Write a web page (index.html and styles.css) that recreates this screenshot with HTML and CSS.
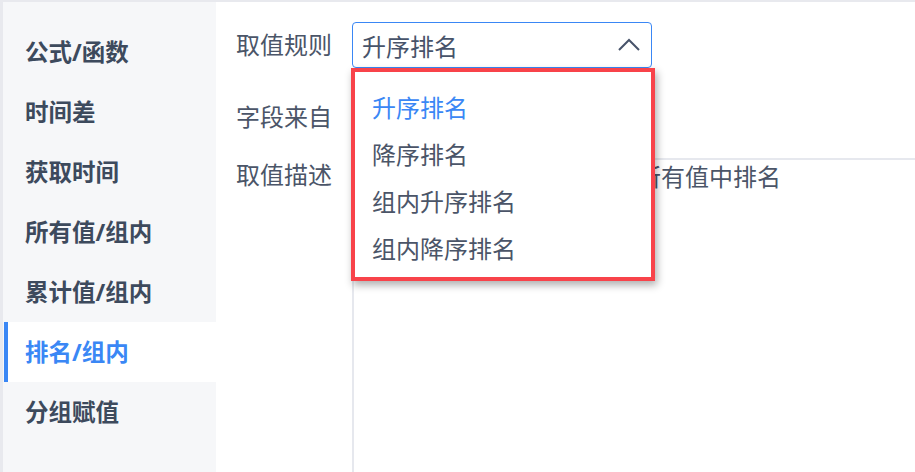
FILE: index.html
```html
<!DOCTYPE html>
<html lang="zh-CN">
<head>
    <meta charset="UTF-8">
    <meta name="viewport" content="width=device-width, initial-scale=1.0">
    <title>排名/组内</title>
    <link rel="stylesheet" href="styles.css">
</head>
<body>
    <div class="page">
        <aside class="sidebar">
            <div class="nav-item">公式/函数</div>
            <div class="nav-item">时间差</div>
            <div class="nav-item">获取时间</div>
            <div class="nav-item">所有值/组内</div>
            <div class="nav-item">累计值/组内</div>
            <div class="nav-item active">排名/组内</div>
            <div class="nav-item">分组赋值</div>
        </aside>

        <main class="content">
            <div class="form-row">
                <label class="form-label">取值规则</label>
                <div class="select-wrap">
                    <div class="select">
                        <span>升序排名</span>
                        <svg class="caret" width="24" height="14" viewBox="0 0 24 14">
                            <polyline points="2,12 12,2 22,12" fill="none" stroke="#47536a" stroke-width="2"/>
                        </svg>
                    </div>
                    <!-- open menu -->
                    <ul class="dropdown">
                        <li class="selected">升序排名</li>
                        <li>降序排名</li>
                        <li>组内升序排名</li>
                        <li>组内降序排名</li>
                    </ul>
                </div>
            </div>

            <div class="form-row field-row">
                <label class="form-label">字段来自</label>
                <div class="field"></div>
            </div>

            <div class="form-row desc-row">
                <label class="form-label">取值描述</label>
                <div class="desc-box">计算当前行值在该字段的所有值中排名</div>
            </div>
        </main>
    </div>
</body>
</html>
```

FILE: styles.css
```css
body {
    margin: 0;
    overflow: hidden;
    font-family: "Noto Sans", "Noto Sans CJK SC", sans-serif;
    background: #fff;
}
.page {
    display: flex;
    height: 472px;
    box-sizing: border-box;
    border-top: 2px solid #e8e9ee;
    border-left: 3px solid #e8e9ee;
}
.sidebar {
    width: 213px;
    flex-shrink: 0;
    box-sizing: border-box;
    padding: 20px 0 0 1px;
    background: #f6f7f9;
}
.nav-item {
    position: relative;
    height: 60px;
    line-height: 60px;
    padding-left: 21px;
    font-size: 23.5px;
    font-weight: bold;
    color: #3d4a5d;
}
.nav-item.active {
    background: #fff;
    color: #3a87f5;
}
.nav-item.active::before {
    content: "";
    position: absolute;
    left: 0;
    top: 0;
    bottom: 0;
    width: 4px;
    background: #3a87f5;
}
.content {
    flex: 1;
    padding: 20px 0 0 20px;
    display: flex;
    flex-direction: column;
}
.form-row {
    display: flex;
    height: 46px;
}
.form-label {
    width: 116px;
    flex-shrink: 0;
    line-height: 46px;
    font-size: 24px;
    color: #4b5568;
}
.select-wrap {
    position: relative;
}
.select {
    width: 300px;
    height: 46px;
    box-sizing: border-box;
    border: 1.5px solid #3a87f5;
    border-radius: 4px;
    display: flex;
    align-items: center;
    justify-content: space-between;
    padding: 0 10px 0 9px;
    font-size: 24px;
    color: #47536a;
}
.caret {
    display: block;
}
.dropdown {
    position: absolute;
    top: 46px;
    left: -1px;
    z-index: 10;
    width: 304px;
    box-sizing: border-box;
    margin: 0;
    padding: 12px 0 5px;
    list-style: none;
    background: #fff;
    border: 4px solid #f8434a;
    box-shadow: 2px 4px 8px rgba(0, 0, 0, 0.32);
}
.dropdown li {
    height: 47px;
    line-height: 47px;
    padding-left: 17px;
    font-size: 24px;
    color: #4b5568;
}
.dropdown li.selected {
    color: #3a87f5;
}
.field-row {
    margin-top: 26px;
}
.field {
    width: 300px;
}
.desc-row {
    margin-top: 18px;
    flex: 1;
    height: auto;
}
.desc-row .form-label {
    line-height: 34px;
}
.desc-box {
    flex: 1;
    border-top: 2px solid #e6e8ee;
    border-left: 2px solid #e6e8ee;
    padding: 0 0 0 19px;
    line-height: 34px;
    font-size: 24px;
    color: #4b5568;
    white-space: nowrap;
    overflow: hidden;
}
```
